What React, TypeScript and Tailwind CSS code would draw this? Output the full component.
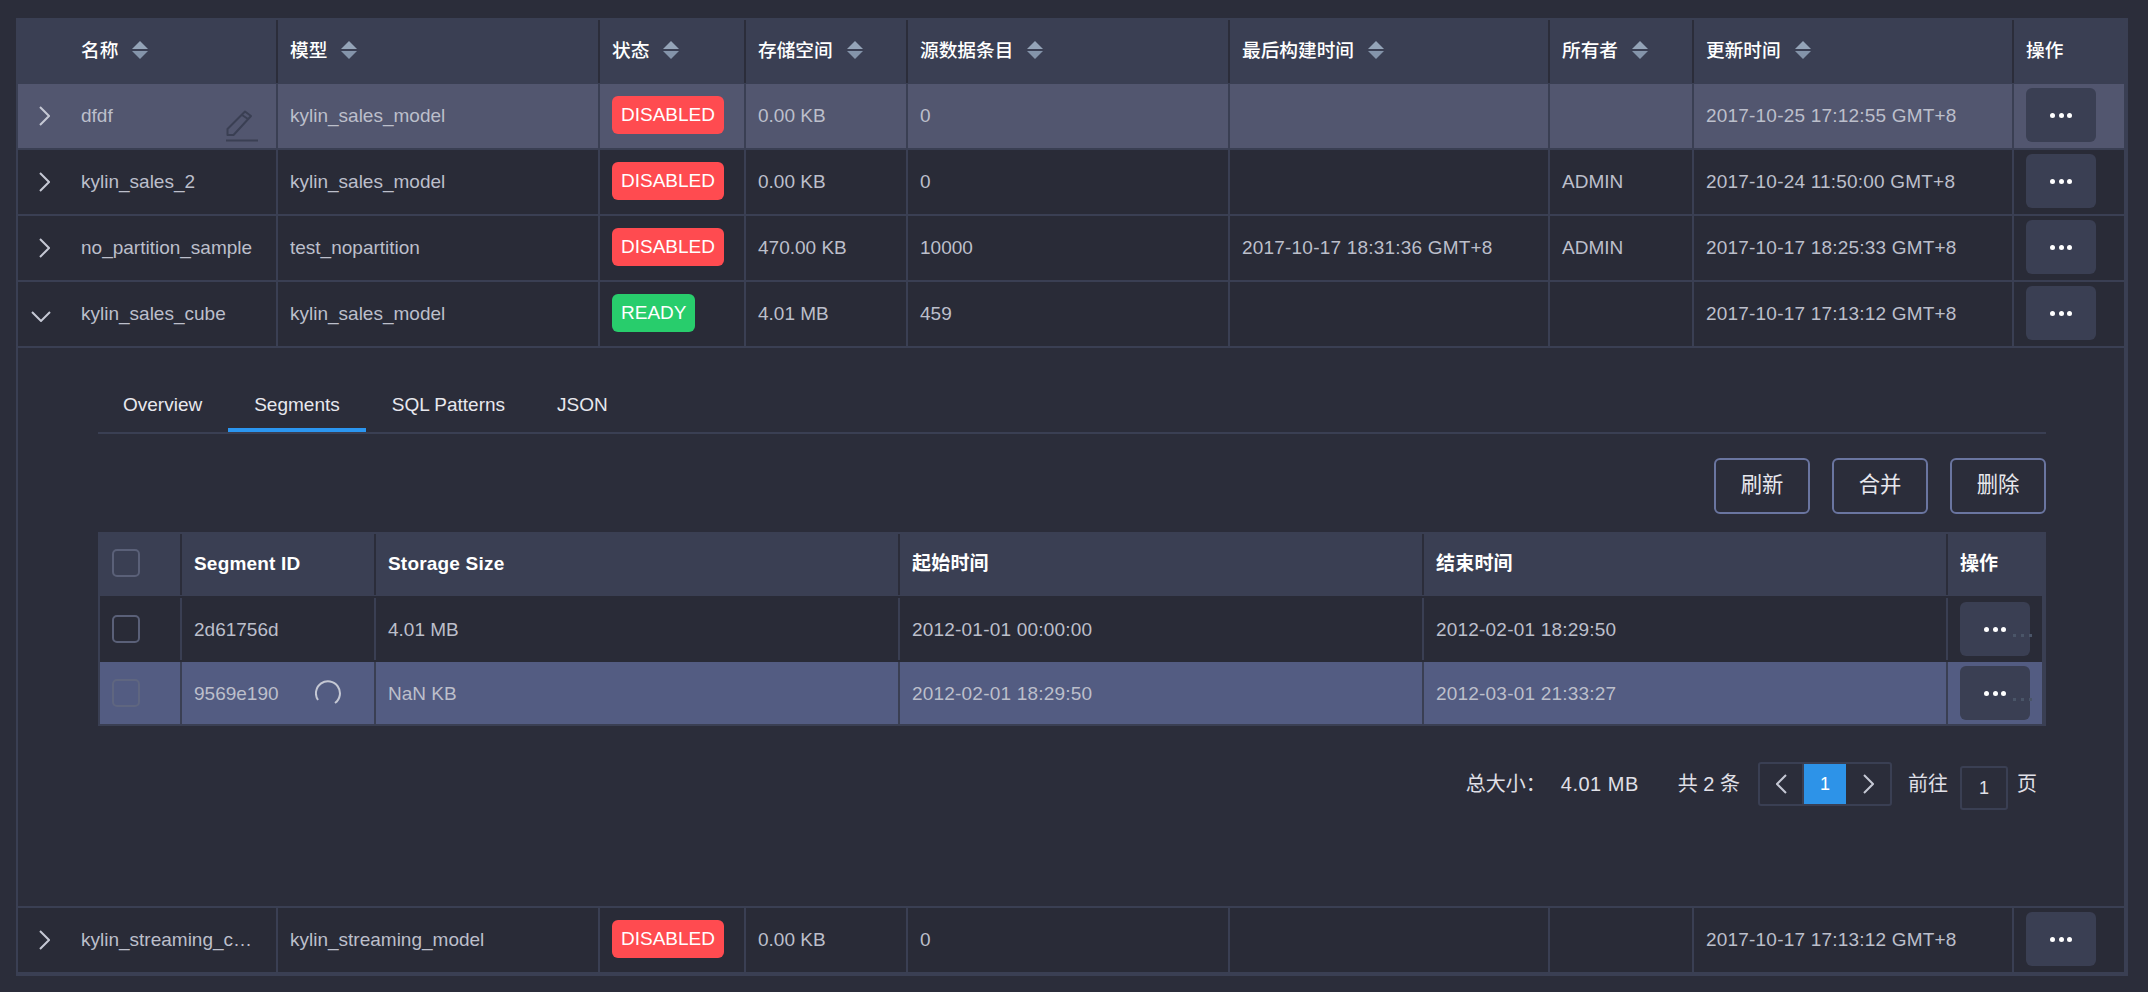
import type { ReactNode } from "react";

const cubeCols = "grid grid-cols-[260px_322px_146px_162px_322px_320px_144px_320px_110px]";
const segCols = "grid grid-cols-[82px_194px_524px_524px_524px_94px]";

type Cube = {
  name: string;
  model: string;
  status: "DISABLED" | "READY";
  size: string;
  records: string;
  built: string;
  owner: string;
  updated: string;
  active?: boolean;
  open?: boolean;
};

const cubesTop: Cube[] = [
  { name: "dfdf", model: "kylin_sales_model", status: "DISABLED", size: "0.00 KB", records: "0", built: "", owner: "", updated: "2017-10-25 17:12:55 GMT+8", active: true },
  { name: "kylin_sales_2", model: "kylin_sales_model", status: "DISABLED", size: "0.00 KB", records: "0", built: "", owner: "ADMIN", updated: "2017-10-24 11:50:00 GMT+8" },
  { name: "no_partition_sample", model: "test_nopartition", status: "DISABLED", size: "470.00 KB", records: "10000", built: "2017-10-17 18:31:36 GMT+8", owner: "ADMIN", updated: "2017-10-17 18:25:33 GMT+8" },
  { name: "kylin_sales_cube", model: "kylin_sales_model", status: "READY", size: "4.01 MB", records: "459", built: "", owner: "", updated: "2017-10-17 17:13:12 GMT+8", open: true },
];

const streaming: Cube = {
  name: "kylin_streaming_cube",
  model: "kylin_streaming_model",
  status: "DISABLED",
  size: "0.00 KB",
  records: "0",
  built: "",
  owner: "",
  updated: "2017-10-17 17:13:12 GMT+8",
};

const headers = ["模型", "状态", "存储空间", "源数据条目", "最后构建时间", "所有者", "更新时间"];

function SortIcon() {
  return (
    <svg width="16" height="18" viewBox="0 0 16 18" className="ml-[14px] shrink-0">
      <polygon points="8,0 16,8 0,8" fill="#94a4b8" />
      <polygon points="0,10 16,10 8,18" fill="#8494aa" />
    </svg>
  );
}

function Chevron({ open }: { open?: boolean }) {
  if (open) {
    return (
      <svg width="20" height="11" viewBox="0 0 20 11" className="mt-[4px]">
        <path d="M1 1 L10 10 L19 1" fill="none" stroke="#c5c8d4" strokeWidth="2" />
      </svg>
    );
  }
  return (
    <svg width="11" height="20" viewBox="0 0 11 20" className="ml-[8px]">
      <path d="M1 1 L10 10 L1 19" fill="none" stroke="#c5c8d4" strokeWidth="2" />
    </svg>
  );
}

function EditIcon() {
  return (
    <svg width="32" height="32" viewBox="0 0 32 32" className="absolute left-[208px] top-[26px]">
      <path d="M1.5 19 L19 1.5 L25 6 L7.5 25 L1.5 25 Z M16 5 L22 9" fill="none" stroke="#3a3f53" strokeWidth="2" strokeLinejoin="round" />
      <path d="M0 30.5 H32" stroke="#3a3f53" strokeWidth="2" />
    </svg>
  );
}

function MoreButton() {
  return (
    <button type="button" className="flex h-[54px] w-[70px] items-center justify-center gap-[3.5px] rounded-[6px] bg-[#3a3f53]">
      <span className="size-[5px] rounded-full bg-white" />
      <span className="size-[5px] rounded-full bg-white" />
      <span className="size-[5px] rounded-full bg-white" />
    </button>
  );
}

function Cell({ children, last }: { children?: ReactNode; last?: boolean }) {
  return (
    <div className={`flex h-[64px] min-w-0 items-center px-[12px] ${last ? "" : "border-r-2 border-[#3a3f53]"}`}>
      {children}
    </div>
  );
}

function Stamp({ children }: { children: ReactNode }) {
  return <span className="tracking-[0.2px]">{children}</span>;
}

function CubeRow({ cube }: { cube: Cube }) {
  return (
    <div className={`${cubeCols} border-b-2 border-[#3a3f53] text-[#bcbfcb] ${cube.active ? "bg-[#52566f]" : "bg-[#292b37]"}`}>
      <div className="relative flex h-[64px] items-center border-r-2 border-[#3a3f53] pl-[13px]">
        <div className="w-[50px] shrink-0">
          <Chevron open={cube.open} />
        </div>
        <span className="w-[176px] truncate">{cube.name}</span>
        {cube.active && <EditIcon />}
      </div>
      <Cell>{cube.model}</Cell>
      <Cell>
        <span className={`-mt-[2px] flex h-[38px] items-center rounded-[6px] px-[9px] pt-[1px] text-white ${cube.status === "READY" ? "bg-[#28cd6c]" : "bg-[#ff4b50]"}`}>
          {cube.status}
        </span>
      </Cell>
      <Cell>{cube.size}</Cell>
      <Cell>{cube.records}</Cell>
      <Cell>
        <Stamp>{cube.built}</Stamp>
      </Cell>
      <Cell>{cube.owner}</Cell>
      <Cell>
        <Stamp>{cube.updated}</Stamp>
      </Cell>
      <Cell last>
        <div className="-mt-[2px]">
          <MoreButton />
        </div>
      </Cell>
    </div>
  );
}

function Checkbox({ dim }: { dim?: boolean }) {
  return (
    <span className={`block size-[28px] rounded-[5px] border-2 ${dim ? "border-[#5f6680]" : "border-[#5a6078]"}`} />
  );
}

function SegmentRow({ id, size, start, end, active }: { id: string; size: string; start: string; end: string; active?: boolean }) {
  const cell = "flex items-center px-[12px] border-r-2 border-[#3a3f53]";
  return (
    <div className={`${segCols} text-[#bcbfcb] ${active ? "h-[62px] bg-[#535c82]" : "h-[66px] bg-[#292b37] py-[2px]"}`}>
      <div className={cell}>
        <Checkbox dim={active} />
      </div>
      <div className={cell}>
        <span className="pt-[2px]">{id}</span>
        {active && (
          <svg width="26" height="26" viewBox="0 0 26 26" className="ml-[36px] shrink-0">
            <path d="M3 20 A12 12 0 1 1 20 23" fill="none" stroke="#c5c8d4" strokeWidth="2" />
          </svg>
        )}
      </div>
      <div className={cell}>
        <span className="pt-[2px]">{size}</span>
      </div>
      <div className={cell}>
        <span className="pt-[2px] tracking-[0.2px]">{start}</span>
      </div>
      <div className={cell}>
        <span className="pt-[2px] tracking-[0.2px]">{end}</span>
      </div>
      <div className="relative flex items-center pl-[12px]">
        <MoreButton />
        <span className="absolute left-[65px] top-1/2 mt-[5px] flex gap-[5px]">
          <i className="block size-[3px] bg-[#4a5568]" />
          <i className="block size-[3px] bg-[#4a5568]" />
          <i className="block size-[3px] bg-[#4a5568]" />
        </span>
      </div>
    </div>
  );
}

function SegmentsPanel() {
  const tabs = ["Overview", "Segments", "SQL Patterns", "JSON"];
  return (
    <div className="h-[560px] border-b-2 border-[#3a3f53] pl-[80px] pr-[78px]">
      <div className="flex h-[86px] items-end border-b-2 border-[#3a3f53]">
        <div className="-ml-[1px] flex">
          {tabs.map((tab) => (
            <div
              key={tab}
              className={`flex h-[50px] items-center px-[26px] text-[#e8e8ee] ${tab === "Segments" ? "border-b-4 border-[#2b96f0]" : "pb-[4px]"}`}
            >
              {tab}
            </div>
          ))}
        </div>
      </div>

      <div className="mt-[24px] flex justify-end gap-[22px]">
        {["刷新", "合并", "删除"].map((label) => (
          <button key={label} type="button" className="h-[56px] w-[96px] rounded-[6px] border-2 border-[#6a75a0] text-[21.33px] text-[#e8e8ee]">
            {label}
          </button>
        ))}
      </div>

      <div className="mt-[18px] border-b-2 border-l-2 border-r-4 border-[#3a3f53]">
        <div className={`${segCols} h-[64px] bg-[#3a3f53] pb-[1px] pt-[2px] font-bold text-white`}>
          <div className="flex items-center border-r-2 border-[#2b2d3a] px-[12px] pb-[3px]">
            <Checkbox />
          </div>
          {["Segment ID", "Storage Size", "起始时间", "结束时间"].map((title) => (
            <div key={title} className="flex items-center border-r-2 border-[#2b2d3a] px-[12px] pb-[3px]">
              <span className="pt-[2px] tracking-[0.2px]">{title}</span>
            </div>
          ))}
          <div className="flex items-center px-[12px] pb-[3px]">
            <span className="pt-[2px]">操作</span>
          </div>
        </div>
        <SegmentRow id="2d61756d" size="4.01 MB" start="2012-01-01 00:00:00" end="2012-02-01 18:29:50" />
        <SegmentRow id="9569e190" size="NaN KB" start="2012-02-01 18:29:50" end="2012-03-01 21:33:27" active />
      </div>

      <div className="mt-[36px] flex h-[44px] items-center justify-end pr-[9px] text-[20px] text-[#e0e0e8]">
        <span>总大小：</span>
        <span className="ml-[15px] tracking-[0.5px]">4.01 MB</span>
        <span className="ml-[39px]">共 2 条</span>
        <div className="ml-[18px] flex h-[44px] w-[134px] rounded-[3px] border-2 border-[#3a3f53]">
          <div className="flex w-[44px] items-center justify-center border-r-2 border-[#3a3f53]">
            <svg width="11" height="20" viewBox="0 0 11 20">
              <path d="M10 1 L1 10 L10 19" fill="none" stroke="#c5c8d4" strokeWidth="2" />
            </svg>
          </div>
          <div className="flex w-[42px] items-center justify-center bg-[#2d93e8] text-[18px] text-white">1</div>
          <div className="flex flex-1 items-center justify-center">
            <svg width="11" height="20" viewBox="0 0 11 20">
              <path d="M1 1 L10 10 L1 19" fill="none" stroke="#c5c8d4" strokeWidth="2" />
            </svg>
          </div>
        </div>
        <span className="ml-[16px]">前往</span>
        <div className="ml-[12px] mt-[8px] flex h-[44px] w-[48px] items-center justify-center rounded-[3px] border-2 border-[#3a3f53] text-[18px]">1</div>
        <span className="ml-[9px]">页</span>
      </div>
    </div>
  );
}

export default function App() {
  return (
    <div className="h-[992px] w-[2148px] overflow-hidden bg-[#2b2d3a] pl-[16px] pt-[18px] font-['Liberation_Sans','Noto_Sans_CJK_SC',sans-serif] text-[19px]">
      <div className="w-[2112px] border-b-2 border-l-2 border-r-4 border-[#3a3f53]">
        <div className="-ml-[2px] h-[66px] w-[2108px] bg-[#3a3f53] pb-[1px] pl-[2px] pt-[2px] font-medium text-white">
          <div className={`${cubeCols} h-full text-[18.67px]`}>
            <div className="flex items-center border-r-2 border-[#2b2d3a] pb-[4px] pl-[63px]">
              <span className="pt-[2px]">名称</span>
              <SortIcon />
            </div>
            {headers.map((title) => (
              <div key={title} className="flex items-center border-r-2 border-[#2b2d3a] px-[12px] pb-[4px]">
                <span className="pt-[2px]">{title}</span>
                <SortIcon />
              </div>
            ))}
            <div className="flex items-center px-[12px] pb-[4px]">
              <span className="pt-[2px]">操作</span>
            </div>
          </div>
        </div>

        {cubesTop.map((cube) => (
          <CubeRow key={cube.name} cube={cube} />
        ))}
        <SegmentsPanel />
        <CubeRow cube={streaming} />
      </div>
    </div>
  );
}
